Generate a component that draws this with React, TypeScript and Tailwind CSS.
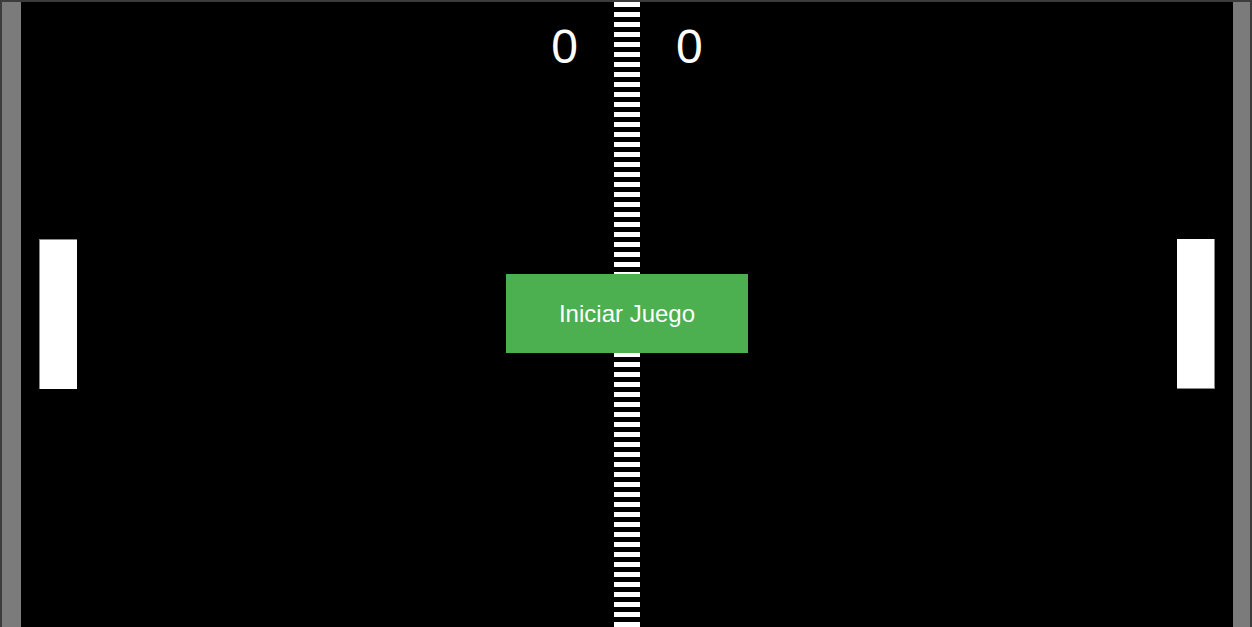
import React from 'react';

const PADDLE = 'absolute top-[237px] h-[150px] w-[38px] bg-white';

export default function App() {
  const dashes = Array.from({ length: 64 });

  return (
    <div className="h-[627px] w-full overflow-hidden bg-[#3c3c3c] pt-[2px] px-[2px] font-['Liberation_Sans',Arial,sans-serif]">
      <div className="flex h-full">
        <div className="w-[19px] shrink-0 bg-[#7b7b7b]" />
        <div className="relative flex-1 bg-black">
          {/* center net */}
          <div className="absolute inset-y-0 left-1/2 flex w-[26px] -translate-x-1/2 flex-col gap-[5px]">
            {dashes.map((_, i) => (
              <div key={i} className="h-[5px] w-full shrink-0 bg-white" />
            ))}
          </div>

          {/* score */}
          <div className="absolute inset-x-0 top-[21px] flex justify-center gap-[98px] text-[48px] leading-[48px] text-white">
            <span>0</span>
            <span>0</span>
          </div>

          {/* paddles */}
          <div className={`${PADDLE} left-[18px] border-l border-t border-[#8a8a8a]`} />
          <div className={`${PADDLE} right-[18px] border-r border-b border-[#8a8a8a]`} />

          <button className="absolute left-1/2 top-[272px] flex h-[79px] w-[242px] -translate-x-1/2 items-center justify-center bg-[#4caf50] text-[24px] text-white">
            Iniciar Juego
          </button>
        </div>
        <div className="w-[17px] shrink-0 bg-[#7b7b7b]" />
      </div>
    </div>
  );
}
